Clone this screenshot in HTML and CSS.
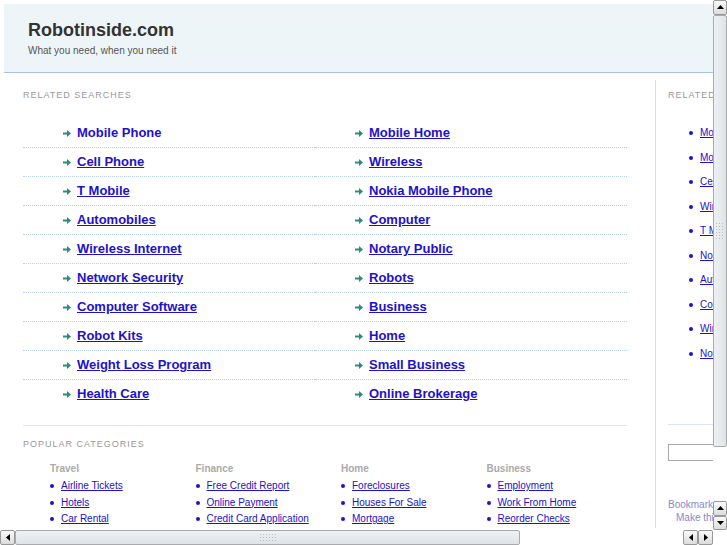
FILE: index.html
```html
<!DOCTYPE html>
<html lang="en">
<head>
    <meta charset="UTF-8">
    <title>Robotinside.com</title>
    <link rel="stylesheet" href="styles.css">
</head>
<body>
<div class="window">
    <div class="viewport">
        <div class="page">
            <div class="header">
                <h1>Robotinside.com</h1>
                <p class="tagline">What you need, when you need it</p>
            </div>

            <div class="content">
                <div class="main">
                    <h2 class="section-title">RELATED SEARCHES</h2>
                    <ul class="searches">
                        <li><span class="arrow"><svg width="8" height="7" viewBox="0 0 8 7"><path d="M0 2.5h4V0l4 3.5L4 7V4.5H0z"/></svg></span><a class="hover" href="#">Mobile Phone</a></li>
                        <li><span class="arrow"><svg width="8" height="7" viewBox="0 0 8 7"><path d="M0 2.5h4V0l4 3.5L4 7V4.5H0z"/></svg></span><a href="#">Mobile Home</a></li>
                        <li><span class="arrow"><svg width="8" height="7" viewBox="0 0 8 7"><path d="M0 2.5h4V0l4 3.5L4 7V4.5H0z"/></svg></span><a href="#">Cell Phone</a></li>
                        <li><span class="arrow"><svg width="8" height="7" viewBox="0 0 8 7"><path d="M0 2.5h4V0l4 3.5L4 7V4.5H0z"/></svg></span><a href="#">Wireless</a></li>
                        <li><span class="arrow"><svg width="8" height="7" viewBox="0 0 8 7"><path d="M0 2.5h4V0l4 3.5L4 7V4.5H0z"/></svg></span><a href="#">T Mobile</a></li>
                        <li><span class="arrow"><svg width="8" height="7" viewBox="0 0 8 7"><path d="M0 2.5h4V0l4 3.5L4 7V4.5H0z"/></svg></span><a href="#">Nokia Mobile Phone</a></li>
                        <li><span class="arrow"><svg width="8" height="7" viewBox="0 0 8 7"><path d="M0 2.5h4V0l4 3.5L4 7V4.5H0z"/></svg></span><a href="#">Automobiles</a></li>
                        <li><span class="arrow"><svg width="8" height="7" viewBox="0 0 8 7"><path d="M0 2.5h4V0l4 3.5L4 7V4.5H0z"/></svg></span><a href="#">Computer</a></li>
                        <li><span class="arrow"><svg width="8" height="7" viewBox="0 0 8 7"><path d="M0 2.5h4V0l4 3.5L4 7V4.5H0z"/></svg></span><a href="#">Wireless Internet</a></li>
                        <li><span class="arrow"><svg width="8" height="7" viewBox="0 0 8 7"><path d="M0 2.5h4V0l4 3.5L4 7V4.5H0z"/></svg></span><a href="#">Notary Public</a></li>
                        <li><span class="arrow"><svg width="8" height="7" viewBox="0 0 8 7"><path d="M0 2.5h4V0l4 3.5L4 7V4.5H0z"/></svg></span><a href="#">Network Security</a></li>
                        <li><span class="arrow"><svg width="8" height="7" viewBox="0 0 8 7"><path d="M0 2.5h4V0l4 3.5L4 7V4.5H0z"/></svg></span><a href="#">Robots</a></li>
                        <li><span class="arrow"><svg width="8" height="7" viewBox="0 0 8 7"><path d="M0 2.5h4V0l4 3.5L4 7V4.5H0z"/></svg></span><a href="#">Computer Software</a></li>
                        <li><span class="arrow"><svg width="8" height="7" viewBox="0 0 8 7"><path d="M0 2.5h4V0l4 3.5L4 7V4.5H0z"/></svg></span><a href="#">Business</a></li>
                        <li><span class="arrow"><svg width="8" height="7" viewBox="0 0 8 7"><path d="M0 2.5h4V0l4 3.5L4 7V4.5H0z"/></svg></span><a href="#">Robot Kits</a></li>
                        <li><span class="arrow"><svg width="8" height="7" viewBox="0 0 8 7"><path d="M0 2.5h4V0l4 3.5L4 7V4.5H0z"/></svg></span><a href="#">Home</a></li>
                        <li><span class="arrow"><svg width="8" height="7" viewBox="0 0 8 7"><path d="M0 2.5h4V0l4 3.5L4 7V4.5H0z"/></svg></span><a href="#">Weight Loss Program</a></li>
                        <li><span class="arrow"><svg width="8" height="7" viewBox="0 0 8 7"><path d="M0 2.5h4V0l4 3.5L4 7V4.5H0z"/></svg></span><a href="#">Small Business</a></li>
                        <li class="last"><span class="arrow"><svg width="8" height="7" viewBox="0 0 8 7"><path d="M0 2.5h4V0l4 3.5L4 7V4.5H0z"/></svg></span><a href="#">Health Care</a></li>
                        <li class="last"><span class="arrow"><svg width="8" height="7" viewBox="0 0 8 7"><path d="M0 2.5h4V0l4 3.5L4 7V4.5H0z"/></svg></span><a href="#">Online Brokerage</a></li>
                    </ul>

                    <div class="popular">
                        <h2 class="section-title">POPULAR CATEGORIES</h2>
                        <div class="categories">
                            <div class="category">
                                <h3>Travel</h3>
                                <ul class="dots">
                                    <li><a href="#">Airline Tickets</a></li>
                                    <li><a href="#">Hotels</a></li>
                                    <li><a href="#">Car Rental</a></li>
                                </ul>
                            </div>
                            <div class="category">
                                <h3>Finance</h3>
                                <ul class="dots">
                                    <li><a href="#">Free Credit Report</a></li>
                                    <li><a href="#">Online Payment</a></li>
                                    <li><a href="#">Credit Card Application</a></li>
                                </ul>
                            </div>
                            <div class="category">
                                <h3>Home</h3>
                                <ul class="dots">
                                    <li><a href="#">Foreclosures</a></li>
                                    <li><a href="#">Houses For Sale</a></li>
                                    <li><a href="#">Mortgage</a></li>
                                </ul>
                            </div>
                            <div class="category">
                                <h3>Business</h3>
                                <ul class="dots">
                                    <li><a href="#">Employment</a></li>
                                    <li><a href="#">Work From Home</a></li>
                                    <li><a href="#">Reorder Checks</a></li>
                                </ul>
                            </div>
                        </div>
                    </div>
                </div>

                <div class="sidebar">
                    <h2 class="section-title">RELATED SEARCHES</h2>
                    <ul class="dots side-links">
                        <li><a href="#">Mobile Phone</a></li>
                        <li><a href="#">Mobile Home</a></li>
                        <li><a href="#">Cell Phone</a></li>
                        <li><a href="#">Wireless</a></li>
                        <li><a href="#">T Mobile</a></li>
                        <li><a href="#">Nokia Mobile Phone</a></li>
                        <li><a href="#">Automobiles</a></li>
                        <li><a href="#">Computer</a></li>
                        <li><a href="#">Wireless Internet</a></li>
                        <li><a href="#">Notary Public</a></li>
                    </ul>
                    <div class="search-box">
                        <input type="text">
                    </div>
                    <p class="bookmark">Bookmark this page</p>
                    <p class="bookmark indent">Make this your homepage</p>
                </div>
            </div>
        </div>
    </div>

    <div class="vscroll">
        <div class="sb-btn"><svg width="7" height="4" viewBox="0 0 7 4"><path d="M0 4L3.5 0 7 4z"/></svg></div>
        <div class="sb-thumb v"><span class="grip"></span></div>
        <div class="sb-track"></div>
        <div class="sb-btn"><svg width="7" height="4" viewBox="0 0 7 4"><path d="M0 4L3.5 0 7 4z"/></svg></div>
        <div class="sb-btn"><svg width="7" height="4" viewBox="0 0 7 4"><path d="M0 0L3.5 4 7 0z"/></svg></div>
    </div>
    <div class="hscroll">
        <div class="sb-btn"><svg width="4" height="7" viewBox="0 0 4 7"><path d="M4 0L0 3.5 4 7z"/></svg></div>
        <div class="sb-thumb h"><span class="grip"></span></div>
        <div class="sb-track"></div>
        <div class="sb-btn"><svg width="4" height="7" viewBox="0 0 4 7"><path d="M4 0L0 3.5 4 7z"/></svg></div>
        <div class="sb-btn"><svg width="4" height="7" viewBox="0 0 4 7"><path d="M0 0L4 3.5 0 7z"/></svg></div>
    </div>
    <div class="corner"></div>
</div>
</body>
</html>
```

FILE: styles.css
```css
body {
    margin: 0;
    overflow: hidden;
    font-family: "Liberation Sans", Arial, sans-serif;
    background: #fff;
}
.window {
    display: grid;
    grid-template-columns: 713px 14px;
    grid-template-rows: 530px 15px;
    width: 727px;
    height: 545px;
}
.viewport {
    overflow: hidden;
}
.page {
    width: 900px;
    padding: 4px 0 0 4px;
}

/* header */
.header {
    background: #eef5f8;
    border-bottom: 1px solid #aac2e6;
    padding: 16px 24px 15px;
    height: 37px;
}
.header h1 {
    margin: 0;
    font-size: 18px;
    line-height: 20px;
    color: #333;
}
.tagline {
    margin: 5px 0 0;
    font-size: 10px;
    line-height: 12px;
    color: #555;
}

/* layout */
.content {
    display: flex;
    margin-top: 7px;
}
.main {
    width: 604px;
    padding: 10px 28px 0 19px;
    border-right: 1px solid #d2def0;
}
.sidebar {
    width: 220px;
    padding: 10px 0 0 12px;
}
.section-title {
    margin: 0;
    font-size: 9px;
    line-height: 11px;
    font-weight: normal;
    letter-spacing: 1px;
    color: #999;
}

/* related searches */
.searches {
    list-style: none;
    margin: 18px 0 0;
    padding: 0;
    display: grid;
    grid-template-columns: 292px 312px;
}
.searches li {
    height: 28px;
    line-height: 28px;
    border-bottom: 1px dotted #b9d0ec;
    padding-left: 40px;
    font-size: 13px;
    font-weight: bold;
}
.searches li.last {
    border-bottom: none;
}
.arrow {
    display: inline-block;
    width: 14px;
}
.arrow svg {
    fill: #2e8b7c;
}
a {
    color: #2211cc;
}
a.hover {
    text-decoration: none;
}

/* popular categories */
.popular {
    margin-top: 17px;
    border-top: 1px solid #dce7f3;
    padding-top: 13px;
}
.categories {
    display: flex;
    padding-left: 27px;
    margin-top: 13px;
}
.category {
    flex: none;
    width: 145.5px;
}
.category h3 {
    margin: 0;
    font-size: 10px;
    line-height: 12px;
    color: #aaa;
}
.dots {
    list-style: none;
    margin: 3px 0 0;
    padding: 0;
}
.dots li {
    font-size: 10px;
    line-height: 16.5px;
    display: flex;
    align-items: center;
}
.dots li::before {
    content: "";
    width: 4px;
    height: 4px;
    border-radius: 2px;
    background: #2211cc;
    margin-right: 7px;
}

/* sidebar */
.side-links {
    margin-top: 20px;
    padding-left: 21px;
}
.side-links li {
    line-height: 24.5px;
}
.search-box {
    margin-top: 58px;
    border-top: 1px solid #dce7f3;
    padding-top: 18px;
}
.search-box input {
    width: 180px;
    height: 17px;
    box-sizing: border-box;
    border: 1px solid #aaa;
    margin: 0;
}
.bookmark {
    margin: 37px 0 0;
    font-size: 10px;
    line-height: 13px;
    color: #8888cc;
}
.bookmark.indent {
    margin-top: 0;
    padding-left: 8px;
}

/* scrollbars */
.vscroll, .hscroll {
    display: flex;
    background: #fff;
}
.vscroll {
    flex-direction: column;
}
.sb-btn {
    flex: none;
    width: 14px;
    height: 14.5px;
    box-sizing: border-box;
    border: 1px solid #999;
    border-radius: 2px;
    background: linear-gradient(#fafafa, #dcdcdc);
    display: flex;
    align-items: center;
    justify-content: center;
}
.hscroll .sb-btn {
    width: 15px;
    height: 15px;
}
.sb-btn svg {
    fill: #000;
}
.sb-thumb {
    flex: none;
    box-sizing: border-box;
    border: 1px solid #aaa;
    border-radius: 2px;
    display: flex;
    align-items: center;
    justify-content: center;
}
.sb-thumb.v {
    height: 432px;
    background: linear-gradient(90deg, #eef1f4, #dfe3e8);
}
.sb-thumb.h {
    width: 505px;
    background: linear-gradient(#eef1f4, #dfe3e8);
}
.grip {
    width: 18px;
    height: 18px;
    background-image: radial-gradient(#bbb 40%, transparent 45%);
    background-size: 3px 3px;
}
.sb-thumb.v .grip {
    width: 10px;
}
.sb-thumb.h .grip {
    height: 9px;
}
.sb-track {
    flex: 1;
    background-image: radial-gradient(#ddd 40%, transparent 45%);
    background-size: 2px 2px;
}
.corner {
    background: #fff;
}
```
